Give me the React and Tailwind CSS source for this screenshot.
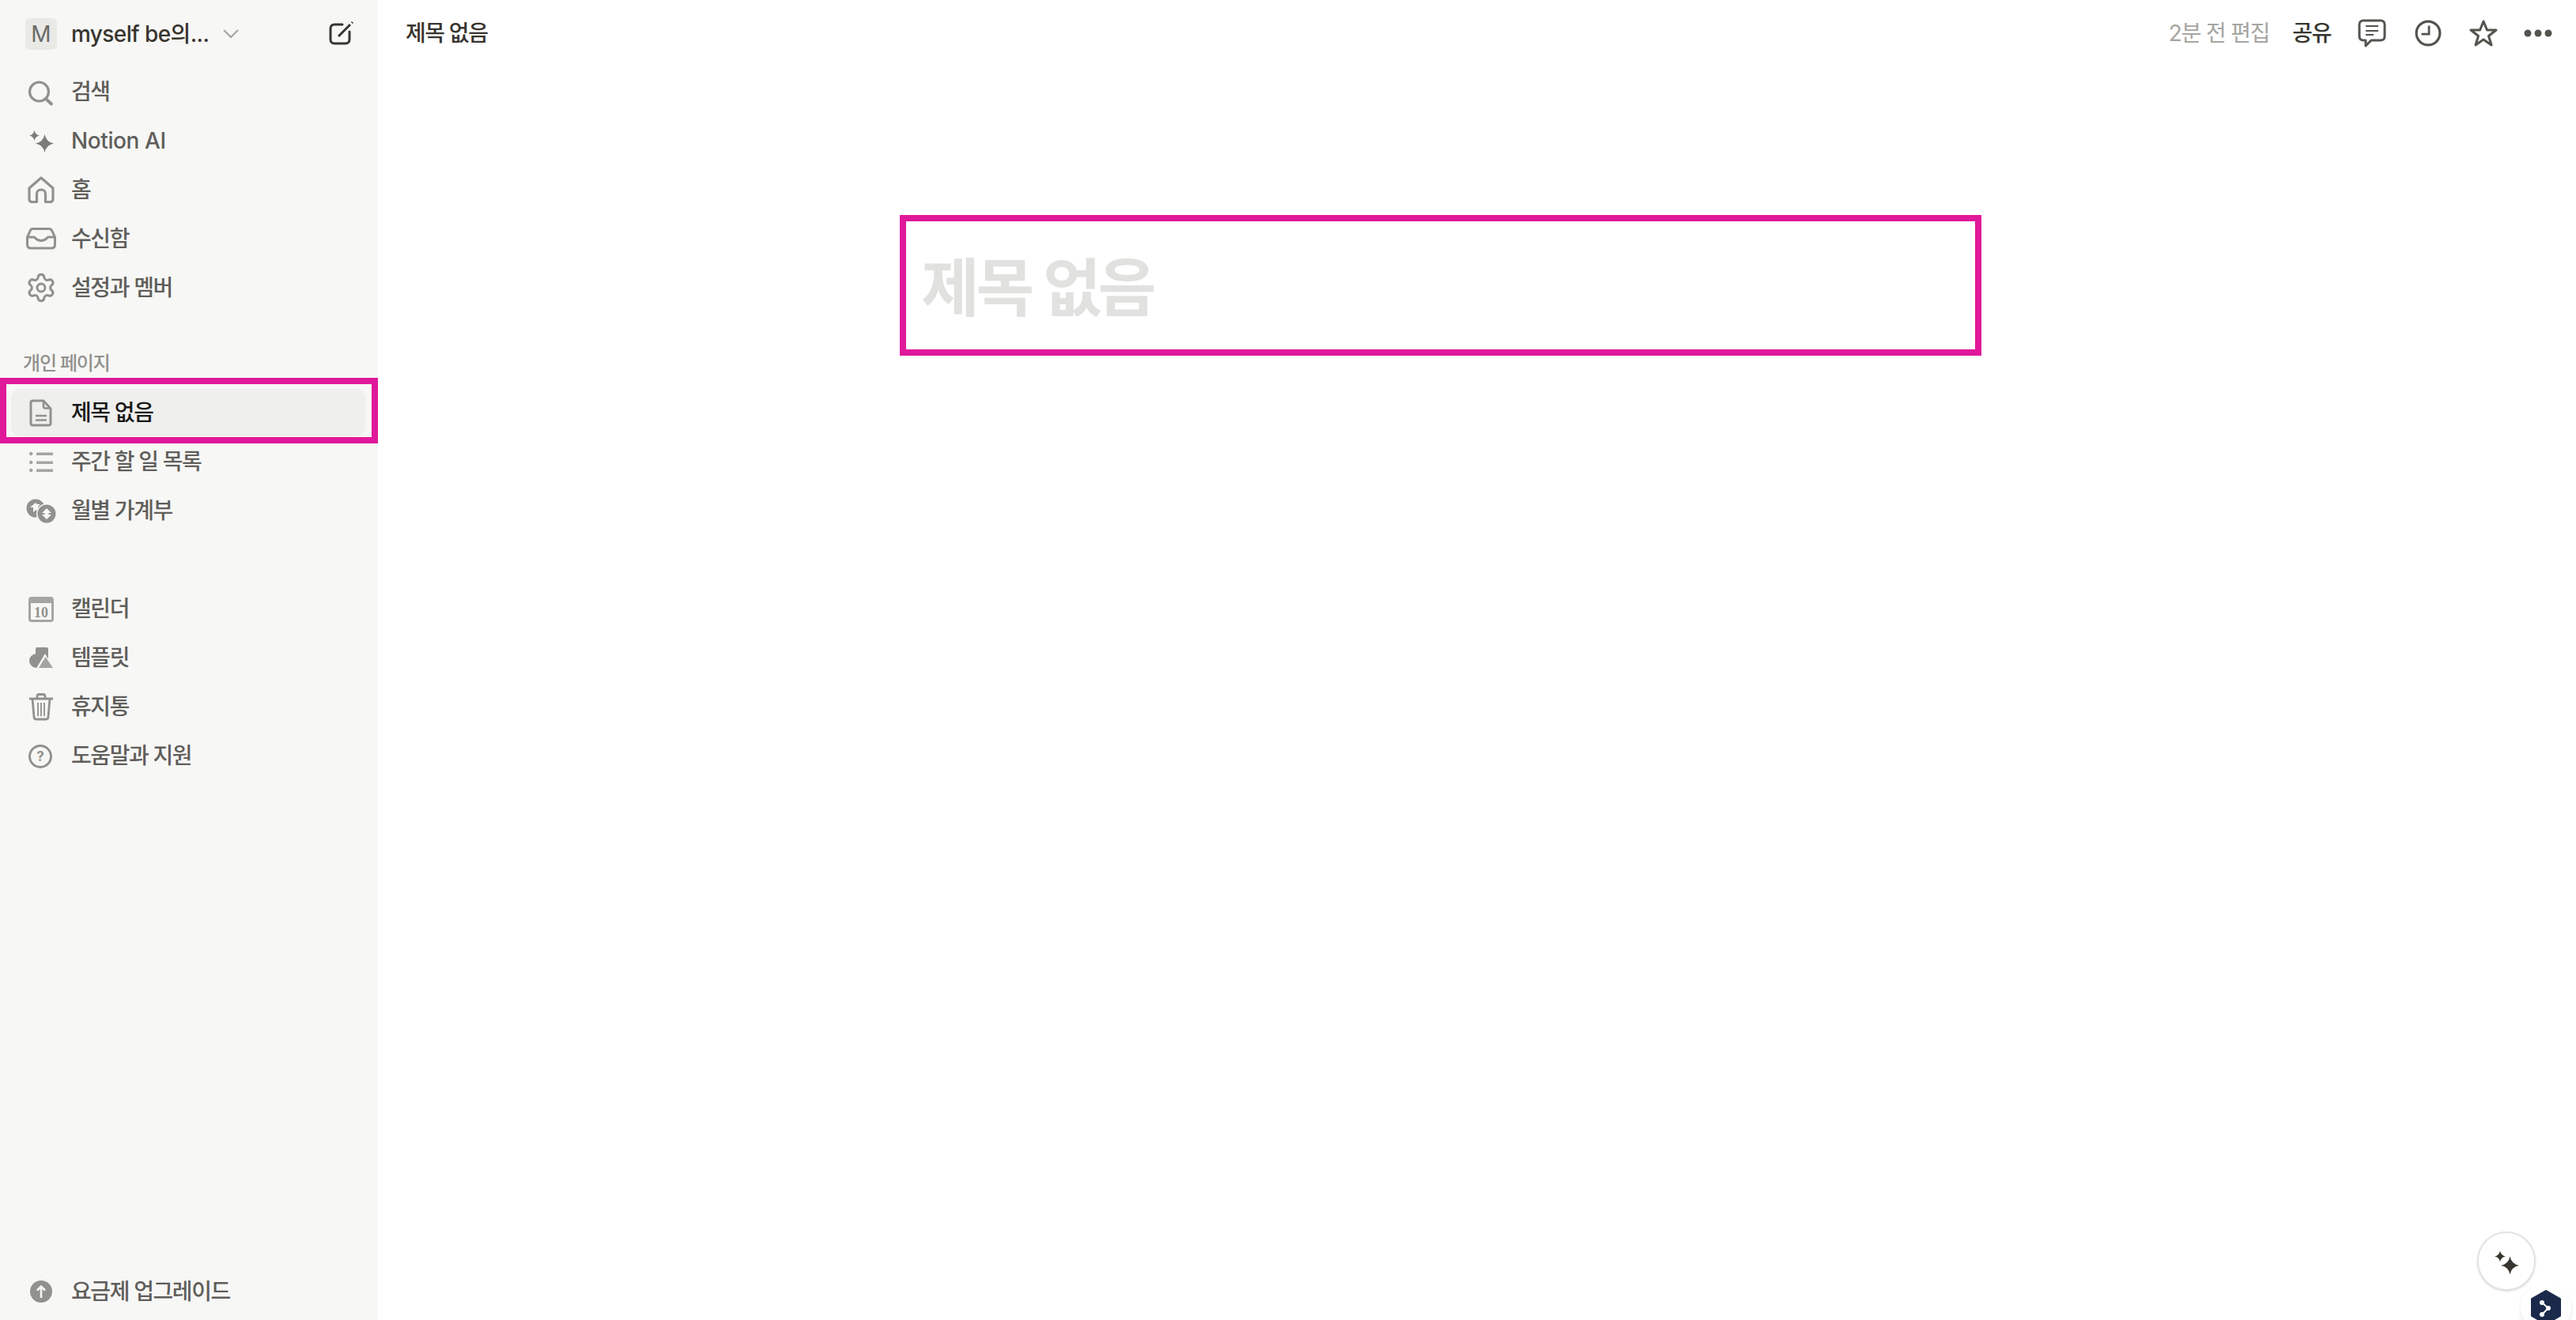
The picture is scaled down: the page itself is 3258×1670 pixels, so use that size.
import { Settings } from "lucide-react";

const FONT = "font-['Inter','Noto_Sans_CJK_KR',sans-serif]";
const G = "#91918e";
const L = "#a5a5a1";
const BG = "#f7f7f5";

const S = ({ children }) => (
  <svg width="40" height="40" viewBox="0 0 40 40" fill="none">{children}</svg>
);

const star = (cx, cy, r) => {
  const k = r * 0.16;
  return `M${cx} ${cy - r}Q${cx + k} ${cy - k} ${cx + r} ${cy}Q${cx + k} ${cy + k} ${cx} ${cy + r}Q${cx - k} ${cy + k} ${cx - r} ${cy}Q${cx - k} ${cy - k} ${cx} ${cy - r}Z`;
};

const icons = {
  search: <S><circle cx="17.5" cy="20" r="12" stroke={G} strokeWidth="3.2" /><path d="M26 29l7 6.500" stroke={G} strokeWidth="4" strokeLinecap="round" /></S>,
  ai: <S><path d={star(24.5, 23.5, 11.5)} fill="#7d7c78" /><path d={star(11.5, 13.5, 6.5)} fill="#7d7c78" /></S>,
  home: <S><path d="M5 18 20 5l15 13v14c0 2.500-1.500 3.500-4 3.500h-5.500V25c0-3-2.200-5-5.500-5s-5.500 2-5.500 5v10.500H9c-2.500 0-4-1-4-3.500z" stroke={G} strokeWidth="3.200" strokeLinejoin="round" /></S>,
  inbox: <S><path d="M9 7.500h21c2 0 3.200 1 4 3l3.500 7.500v9.500c0 3-1.500 4.500-4.500 4.500H7c-3 0-4.500-1.500-4.500-4.500V18L6 10.500c.8-2 1-3 3-3z" stroke={G} strokeWidth="3" /><path d="M3 18h8c2 0 2 4.500 9 4.500S27 18 29 18h8" stroke={G} strokeWidth="3" /></S>,
  gear: <Settings size={40} color={G} strokeWidth={1.8} />,
  doc: <S><path d="M9.500 5H23l9 10v18.500c0 1.500-1 2.500-2.500 2.500h-20C8 36 7 35 7 33.500v-26C7 6 8 5 9.500 5z" stroke={G} strokeWidth="3" strokeLinejoin="round" /><path d="M23 5v7c0 1.500 1 2.500 2.500 2.500H32M13 24h14M13 29.500h14" stroke={G} strokeWidth="2.600" /></S>,
  list: <S><circle cx="7.200" cy="10" r="2.300" fill={L} /><circle cx="7.200" cy="21" r="2.300" fill={L} /><circle cx="7.200" cy="31" r="2.300" fill={L} /><path d="M14 8.500h21v3.500H14zM14 19.500h21V23H14zM14 29.500h21V33H14z" fill={L} /></S>,
  money: <S><circle cx="13" cy="17" r="11.500" fill={G} /><path d="M13 10l-7 6h4v6l4-3 4 2-2-6 3-3-4 0z" fill={BG} /><circle cx="27" cy="24" r="13" fill={BG} /><circle cx="27" cy="24" r="11.500" fill={G} /><path d="M27 17l-6 6h3.500v2H21l6 6 6-6h-3.500v-2H33z" fill={BG} /></S>,
  cal: <S><rect x="4" y="5" width="32" height="32" rx="4" fill={L} /><rect x="7" y="13" width="26" height="21" fill={BG} /><text x="20" y="31" textAnchor="middle" fontFamily="Liberation Serif" fontWeight="700" fontSize="18" fill={G}>10</text></S>,
  tmpl: <S><rect x="13" y="7" width="16" height="18" rx="2" fill={G} /><circle cx="14" cy="24" r="9" fill={G} /><path d="M25 15 37 35H13z" fill={BG} /><path d="M25.500 19 35 33H17z" fill={L} /></S>,
  trash: <S><path d="M5 10h30M9 10l2 23c0 2 1 3 3 3h12c2 0 3-1 3-3l2-23M15 10V7c0-1.500 1-2.500 2.500-2.500h5C24 4.500 25 5.500 25 7v3" stroke={G} strokeWidth="2.800" /><path d="M16 15v17M20 15v17M24 15v17" stroke={G} strokeWidth="1.800" /></S>,
  help: <S><circle cx="19" cy="21" r="13.500" stroke={G} strokeWidth="3" /><text x="19" y="27" textAnchor="middle" fontFamily="Inter" fontWeight="700" fontSize="17" fill={G}>?</text></S>,
  up: <S><circle cx="20" cy="20" r="14" fill={G} /><path d="M20 28V14M15 18.500l5-5 5 5" stroke={BG} strokeWidth="2.600" /></S>,
};

const Item = ({ icon, label, selected, tracking = "tracking-[-1.4px]" }) => (
  <div className={`flex h-[60px] items-center rounded-xl ${selected ? "bg-[#efefed] text-[#191918]" : "text-[#5f5e5b]"}`}>
    <div className="flex w-[76px] justify-center">{icons[icon]}</div>
    <span className={`whitespace-nowrap text-[28px] font-medium ${tracking}`}>{label}</span>
  </div>
);

export default function App() {
  return (
    <div className={`flex h-[1670px] w-[3258px] overflow-hidden bg-white ${FONT}`}>
      <aside className="flex w-[478px] shrink-0 flex-col bg-[#f7f7f5]">
        <div className="flex h-[86px] shrink-0 items-center pl-[32px] pr-[29px]">
          <div className="flex h-10 w-10 items-center justify-center rounded-md bg-[#e9e9e6] text-[28px] text-[#6b6a67]">M</div>
          <span className="ml-[18px] whitespace-nowrap text-[28px] font-medium tracking-[-0.6px] text-[#37352f]">myself be의...</span>
          <svg width="20" height="12" viewBox="0 0 20 12" fill="none" className="ml-[18px]"><path d="M1 1l9 9 9-9" stroke={L} strokeWidth="2.200" /></svg>
          <svg width="34" height="34" viewBox="0 0 34 34" fill="none" className="ml-auto"><path d="M18 5H8c-3 0-5 2-5 5v14c0 3 2 5 5 5h14c3 0 5-2 5-5V14" stroke="#37352f" strokeWidth="3" strokeLinecap="round" /><path d="M13 20 28 5" stroke="#37352f" strokeWidth="3" /><path d="M30 3l1-1" stroke="#37352f" strokeWidth="3" /></svg>
        </div>
        <nav className="flex flex-col gap-[2px] px-[14px]">
          <Item icon="search" label="검색" />
          <Item icon="ai" label="Notion AI" tracking="tracking-[-0.4px]" />
          <Item icon="home" label="홈" />
          <Item icon="inbox" label="수신함" />
          <Item icon="gear" label="설정과 멤버" />
        </nav>
        <div className="mt-[48px] pl-[29px] text-[24px] font-medium tracking-[-1.2px] text-[#91918e]">개인 페이지</div>
        <div className="relative z-10 border-8 border-[#e0189a] pl-[6px] pr-[8px] pt-[6px] pb-[1px]">
          <Item icon="doc" label="제목 없음" selected />
        </div>
        <nav className="relative z-20 mt-[-7px] flex flex-col gap-[2px] px-[14px]">
          <Item icon="list" label="주간 할 일 목록" />
          <Item icon="money" label="월별 가계부" />
        </nav>
        <nav className="mt-[64px] flex flex-col gap-[2px] px-[14px]">
          <Item icon="cal" label="캘린더" />
          <Item icon="tmpl" label="템플릿" />
          <Item icon="trash" label="휴지통" />
          <Item icon="help" label="도움말과 지원" />
        </nav>
        <nav className="mt-auto mb-[6px] px-[14px]">
          <Item icon="up" label="요금제 업그레이드" />
        </nav>
      </aside>
      <main className="relative flex min-w-0 flex-1 flex-col">
        <header className="flex h-[84px] shrink-0 items-center pl-[35px] pr-[30px]">
          <span className="text-[28px] font-medium tracking-[-1.4px] text-[#37352f]">제목 없음</span>
          <span className="ml-auto text-[28px] tracking-[-1.2px] text-[#a5a5a1]">2분 전 편집</span>
          <span className="ml-[29px] text-[28px] font-medium tracking-[-1.4px] text-[#37352f]">공유</span>
          <svg width="36" height="36" viewBox="0 0 36 36" fill="none" className="ml-[34px]"><path d="M7 2h22c3 0 5 2 5 5v15c0 3-2 5-5 5H17l-7 7v-7H7c-3 0-5-2-5-5V7c0-3 2-5 5-5z" stroke="#55534e" strokeWidth="3" strokeLinejoin="round" /><path d="M10 9h16M10 15h16M10 20h10" stroke="#55534e" strokeWidth="2" /></svg>
          <svg width="34" height="34" viewBox="0 0 32 32" fill="none" className="ml-[36px]"><circle cx="16" cy="16" r="14" stroke="#55534e" strokeWidth="3" /><path d="M17 7v10H8" stroke="#55534e" strokeWidth="2.600" /></svg>
          <svg width="36" height="36" viewBox="0 0 36 36" fill="none" className="ml-[35px]"><path d="M18 3l4.500 11H34l-9.500 7.500L28 33l-10-7-10 7 3.500-11.500L2 14h11.500z" stroke="#55534e" strokeWidth="3" strokeLinejoin="round" /></svg>
          <svg width="36" height="10" viewBox="0 0 36 10" fill="#55534e" className="ml-[33px]"><circle cx="5" cy="5" r="4.500" /><circle cx="18" cy="5" r="4.500" /><circle cx="31" cy="5" r="4.500" /></svg>
        </header>
        <div className="ml-[660px] mt-[188px] flex h-[178px] w-[1368px] items-center border-8 border-[#e0189a] pl-[19px] pt-[6px]">
          <h1 className="text-[80px] font-bold tracking-[-4px] text-[#e1e1df]">제목 없음</h1>
        </div>
        <div className="absolute right-[51px] bottom-[37px] flex h-[75px] w-[74px] items-center justify-center rounded-full border-2 border-[#e3e3e1] bg-white shadow-sm">
          <svg width="32" height="32" viewBox="0 0 32 32" fill="#37352f"><path d={star(20.5, 21, 11.5)} /><path d={star(8, 9.5, 7)} /></svg>
        </div>
        <div className="absolute right-[6px] bottom-[-16px] flex h-[64px] w-[64px] items-center justify-center rounded-full bg-white shadow-md">
          <svg width="38" height="44" viewBox="0 0 38 44"><path d="M19 1.500l17.500 10v21L19 42.500l-17.500-10v-21z" fill="#1b2a4a" stroke="#1b2a4a" strokeWidth="3" strokeLinejoin="round" /><path d="M14 16l8 7-8 8" fill="none" stroke="#fff" strokeWidth="2" /><circle cx="14" cy="16" r="3" fill="#fff" /><circle cx="22" cy="23" r="3" fill="#fff" /><circle cx="14" cy="31" r="3" fill="#fff" /></svg>
        </div>
      </main>
    </div>
  );
}
